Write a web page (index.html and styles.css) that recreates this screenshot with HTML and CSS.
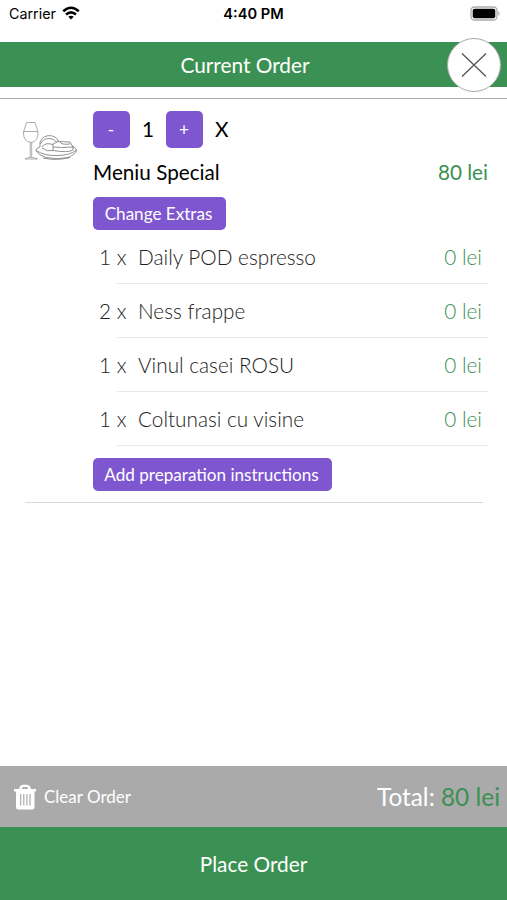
FILE: index.html
```html
<!DOCTYPE html>
<html lang="ro">
<head>
<meta charset="utf-8">
<title>Current Order</title>
<link rel="stylesheet" href="styles.css">
</head>
<body>
<div class="screen">
  <div class="status">
    <div class="carrier"><span>Carrier</span>
      <svg class="wifi" viewBox="0 0 18 14" fill="none" stroke="#000" stroke-width="2.5"><path d="M1.2 5.2Q9-1.8 16.8 5.2M4 8.5Q9 4.2 14 8.5"/><path d="M9 13.4L6.3 10.7Q9 8.6 11.7 10.7Z" fill="#000" stroke="none"/></svg>
    </div>
    <div class="clock">4:40 PM</div>
    <svg class="battery" viewBox="0 0 31 15"><rect x="1" y="1" width="26" height="13" rx="3.5" fill="#fff" stroke="#aaa" stroke-width="1.3"/><rect x="2.7" y="2.7" width="22.6" height="9.6" rx="2" fill="#000"/><path d="M28.4 5q2.4 2.5 0 5z" fill="#aaa"/></svg>
  </div>
  <header class="header">
    <h1 class="title">Current Order</h1>
    <button class="close" aria-label="Close"><svg viewBox="0 0 26 26" stroke="#555" stroke-width="1.3"><path d="M1 1.5L25 24.5M25 1.5L1 24.5"/></svg></button>
  </header>
  <main class="content">
    <article class="item">
      <svg class="thumb" viewBox="0 0 56 42" fill="none" stroke="#777" stroke-width=".8">
        <path d="M4.500 2.500H13L16 12Q16.500 21.500 9 22.500Q1 21.500 1.500 12ZM1.500 11.500H16M8.200 22.500V37.500M9.700 22.500V37.500M3 39Q6 37.500 8.200 37.500H9.700Q13 37.500 15.500 39Z" stroke="#999"/>
        <path d="M18 27Q14 28 14 30.500Q16 35 24 37.500Q35 40 46 37.500Q54 34 54.500 30Q53 27 50 26M14 30.500Q23 36 35 35.500Q48 35.500 54.500 30M21 38Q34 41 48 37.500"/>
        <path d="M18 27Q17 22 20 18.500Q26 13.500 33 17Q36 19 36.500 21.500M18.500 24Q21 18.500 27 18.500Q33 19 34.500 22.500M20 27Q23 22 31 24.500M20 28Q25 32 31 30.500"/>
        <path d="M31 24L36 21.500L48 22L51 27L51 30Q46 33 31 30.500ZM31 27Q38 28 51 27M38 22Q39 25 48 24"/>
      </svg>
      <div class="details">
        <div class="quantity"><button class="step">-</button><span class="count">1</span><button class="step">+</button><span class="remove">X</span></div>
        <div class="row"><span>Meniu Special</span><span class="price">80 lei</span></div>
        <button class="action extras-button">Change Extras</button>
        <ul class="extras">
          <li><span class="number">1 x</span><span>Daily POD espresso</span><span class="cost">0 lei</span></li>
          <li><span class="number">2 x</span><span>Ness frappe</span><span class="cost">0 lei</span></li>
          <li><span class="number">1 x</span><span>Vinul casei ROSU</span><span class="cost">0 lei</span></li>
          <li><span class="number">1 x</span><span>Coltunasi cu visine</span><span class="cost">0 lei</span></li>
        </ul>
        <button class="action notes-button">Add preparation instructions</button>
      </div>
    </article>
  </main>
  <div class="summary">
    <button class="clear"><svg viewBox="0 0 24 26"><path d="M1 5H6L7 2.500Q8 .8 10 .8H14Q16 .8 17 2.500L18 5H23V7.500H21.500V23Q21.500 25.500 19 25.500H5.500Q3 25.500 3 23V7.500H1ZM9 5H15L14.500 3H9.500Z" fill="#fff" fill-rule="evenodd"/><path d="M7.700 10V21.500M10.800 10V21.500M13.900 10V21.500M17 10V21.500" stroke="#aaa" stroke-width="1.200"/></svg><span>Clear Order</span></button>
    <div class="total">Total: <span class="amount">80 lei</span></div>
  </div>
  <button class="place">Place Order</button>
</div>
</body>
</html>
```

FILE: styles.css
```css
* { box-sizing: border-box; }
body { margin: 0; background: #fff; color: #000; font-family: Lato, sans-serif; }
button { border: 0; padding: 0; font-family: inherit; color: #fff; display: block; }
.screen { height: 900px; display: flex; flex-direction: column; }
.status { height: 42px; padding: 5px 6px 0 9px; display: grid; grid-template-columns: 1fr auto 1fr; align-items: start; font: 14.3px/18px Inter, sans-serif; }
.carrier { display: flex; gap: 6px; }
.wifi { width: 18px; height: 14px; margin-top: 1px; }
.clock { font-weight: 600; font-size: 14.6px; margin-right: 3px; }
.battery { width: 31px; height: 15px; justify-self: end; margin-top: 1px; }
.header { height: 57px; border-bottom: 1px solid #aaa; position: relative; }
.title { margin: 0; height: 45px; padding-right: 17px; background: #3b9153; color: #fff; text-align: center; font-weight: 400; font-size: 20.8px; line-height: 46px; }
.close { position: absolute; right: 6px; top: -4.5px; width: 54px; height: 54px; border: 1px solid #aaa; border-radius: 50%; background: #fff; display: flex; align-items: center; justify-content: center; }
.close svg { width: 26px; height: 26px; }
.content { flex: 1; padding: 12px 19px 0 22px; }
.item { display: flex; gap: 15px; height: 392px; position: relative; }
.item::after { content: ""; position: absolute; left: 3px; right: 5px; bottom: 0; height: 1px; background: #d8d8d8; }
.thumb { width: 56px; height: 42px; margin-top: 9px; flex: none; }
.details { flex: 1; }
.quantity { display: flex; align-items: center; height: 37px; font-size: 20.8px; line-height: 24px; }
.count, .remove { padding-bottom: 1px; }
.step { width: 37px; height: 37px; padding-right: 1px; border-radius: 5px; background: #7e57d0; font-size: 17.2px; }
.count { width: 36px; text-align: center; }
.remove { margin-left: 12px; }
.row { display: flex; justify-content: space-between; height: 49px; line-height: 49px; font-size: 20.7px; }
.price, .amount { color: #3b9153; }
.action { height: 33px; padding-right: 2px; border-radius: 5px; background: #7e57d0; font-size: 17.1px; }
.extras-button { width: 133px; }
.extras { list-style: none; margin: 0; padding: 0; font-weight: 300; font-size: 20.75px; color: #222; }
.extras li { display: flex; height: 54px; line-height: 54px; padding: 0 6px; background: linear-gradient(#e8e8e8, #e8e8e8) 24px 100% / 100% 1px no-repeat; }
.number { width: 39px; }
.cost { margin-left: auto; color: #3b9153; }
.notes-button { width: 239px; margin-top: 12px; }
.summary { height: 61px; background: #aaa; display: flex; justify-content: space-between; align-items: center; padding: 0 7px 0 13px; color: #fff; }
.clear { background: none; display: flex; align-items: center; gap: 7px; font-size: 17px; }
.clear svg { width: 24px; height: 26px; }
.total { font-size: 24.4px; }
.place { height: 73px; background: #3b9153; font-size: 20.8px; }
```
